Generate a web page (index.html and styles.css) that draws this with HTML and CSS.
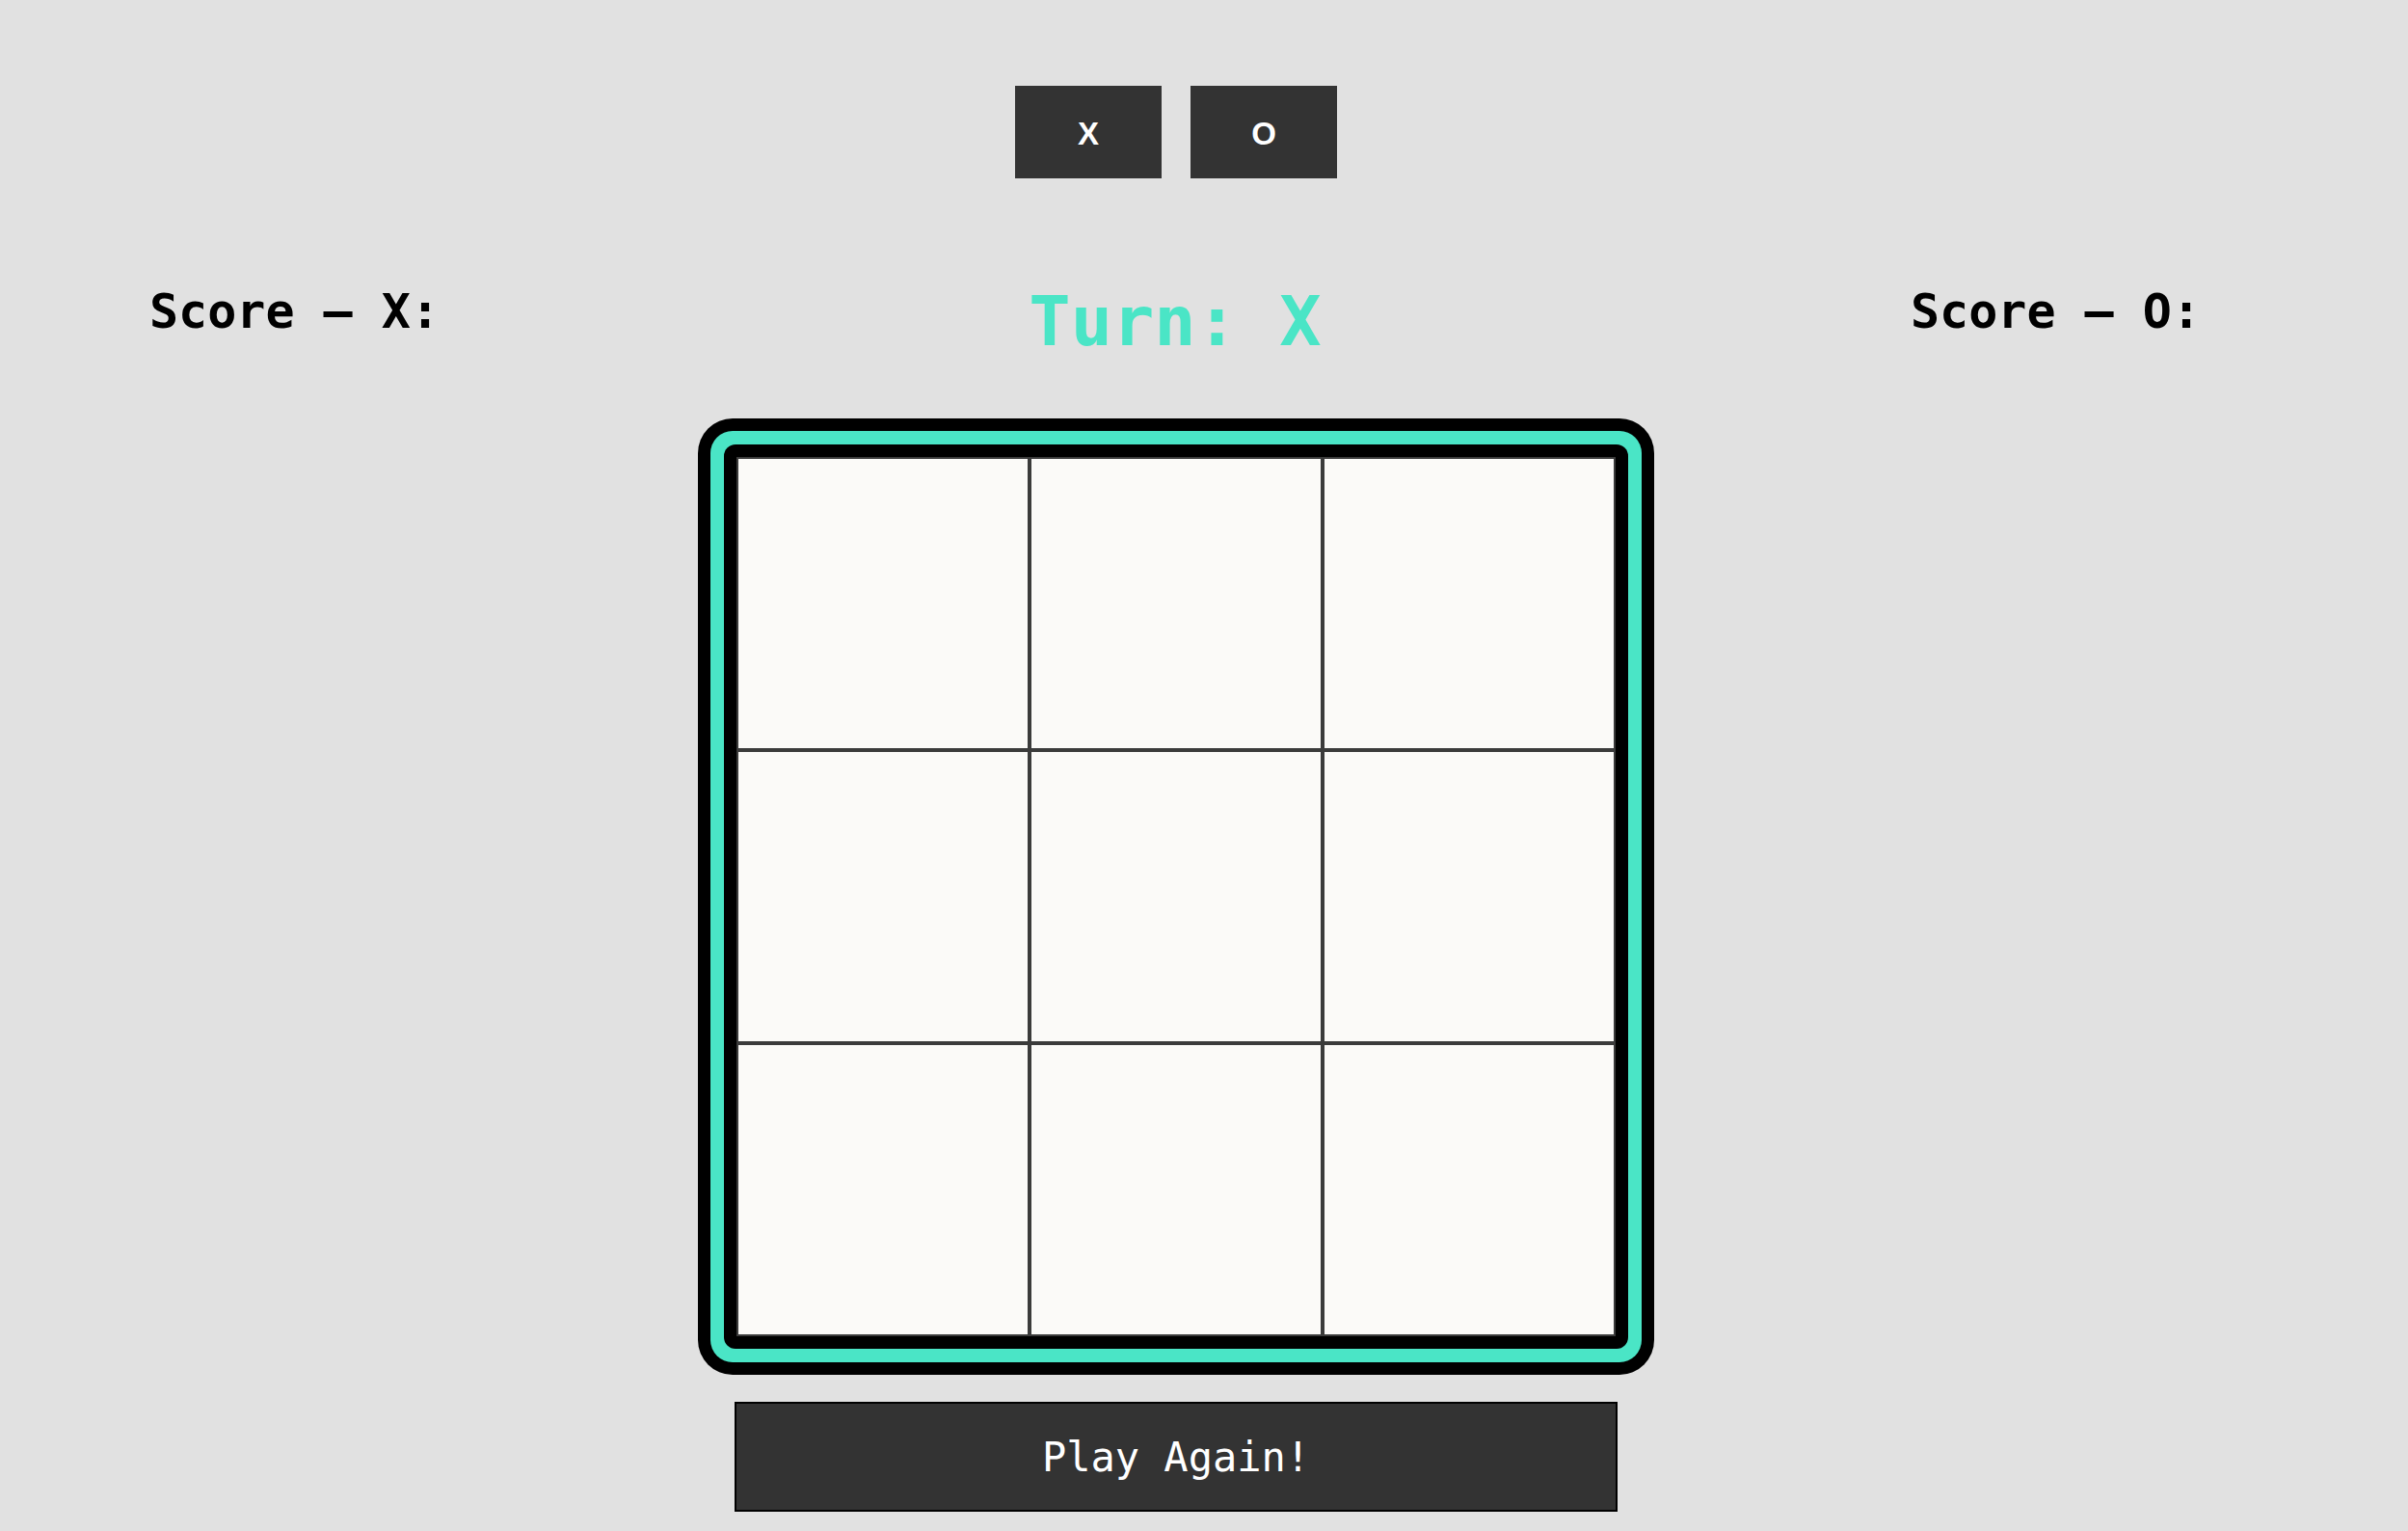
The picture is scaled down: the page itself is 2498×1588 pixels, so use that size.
FILE: index.html
```html
<!DOCTYPE html>
<html lang="en">
<head>
<meta charset="utf-8">
<title>Tic Tac Toe</title>
<link rel="stylesheet" href="styles.css">
</head>
<body>
<div class="app">
  <div class="choices">
    <button class="choice">X</button>
    <button class="choice">O</button>
  </div>
  <div class="status">
    <div class="score score-x">Score – X:</div>
    <div class="turn">Turn: X</div>
    <div class="score score-o">Score – O:</div>
  </div>
  <div class="frame">
    <div class="ring">
      <div class="inner">
        <div class="board">
          <div class="cell"></div>
          <div class="cell"></div>
          <div class="cell"></div>
          <div class="cell"></div>
          <div class="cell"></div>
          <div class="cell"></div>
          <div class="cell"></div>
          <div class="cell"></div>
          <div class="cell"></div>
        </div>
      </div>
    </div>
  </div>
  <button class="again">Play Again!</button>
</div>
</body>
</html>
```
FILE: styles.css
```css
html, body {
  margin: 0;
  padding: 0;
  background: #e1e1e1;
}

.app {
  width: 2440px;
  display: flex;
  flex-direction: column;
  align-items: center;
}

.choices {
  margin-top: 89px;
  display: flex;
  gap: 30px;
}

.choice {
  width: 152px;
  height: 96px;
  box-sizing: border-box;
  border: none;
  background: #333333;
  color: #ffffff;
  font-family: "Liberation Sans", Arial, sans-serif;
  font-weight: bold;
  font-size: 33px;
  padding: 3px 0 0 0;
  margin: 0;
}

.status {
  margin-top: 106px;
  width: 100%;
  box-sizing: border-box;
  padding: 0 157px 0 155px;
  display: grid;
  grid-template-columns: 1fr auto 1fr;
  align-items: start;
}

.score {
  margin-top: 3px;
  font-family: "DejaVu Sans Mono", monospace;
  font-weight: bold;
  font-size: 50px;
  line-height: 58px;
  color: #000000;
  white-space: pre;
}

.score-o {
  justify-self: end;
}

.turn {
  font-family: "DejaVu Sans Mono", monospace;
  font-weight: bold;
  font-size: 72px;
  line-height: 84px;
  color: #4ae5c6;
  white-space: pre;
}

.frame {
  margin-top: 59px;
  background: #000000;
  padding: 13px;
  border-radius: 36px;
}

.ring {
  background: #4ae5c6;
  padding: 14px;
  border-radius: 23px;
}

.inner {
  background: #000000;
  padding: 13px;
  border-radius: 12px;
}

.board {
  display: grid;
  grid-template-columns: repeat(3, 304px);
  grid-template-rows: repeat(3, 304px);
}

.cell {
  box-sizing: border-box;
  border: 2px solid #3b3b3b;
  background: #fbfaf8;
}

.again {
  margin-top: 28px;
  width: 916px;
  height: 114px;
  box-sizing: border-box;
  border: 2px solid #000000;
  background: #333333;
  color: #ffffff;
  font-family: "DejaVu Sans Mono", monospace;
  font-size: 42px;
  padding: 0;
}
```
